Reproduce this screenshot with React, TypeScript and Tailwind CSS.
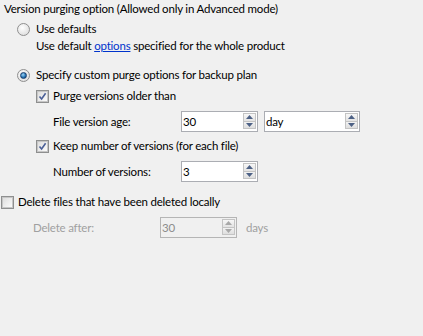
import React from "react";

function Radio({ checked }: { checked?: boolean }) {
  return (
    <span className="relative flex h-[13px] w-[13px] shrink-0 items-center justify-center rounded-full border border-[#8f8f8f] bg-[radial-gradient(circle_at_40%_35%,#ffffff,#d6d6d6)]">
      {checked && (
        <span className="h-[7px] w-[7px] rounded-full border border-[#1a3f6e] bg-[radial-gradient(circle_at_40%_35%,#9fd4f5,#1f6fb0_60%,#0e3f6c)]" />
      )}
    </span>
  );
}

function Check({ checked }: { checked?: boolean }) {
  return (
    <span className="flex h-[13px] w-[13px] shrink-0 items-center justify-center border border-[#8e8f8f] bg-white">
      <span className="flex h-[11px] w-[11px] items-center justify-center border border-[#c6c6c6] bg-[linear-gradient(135deg,#dedede,#fbfbfb)]">
        {checked && (
          <svg width="9" height="9" viewBox="0 0 9 9">
            <path d="M1.5 4.5 L3.6 7 L7.6 1.2" fill="none" stroke="#4a5f97" strokeWidth="1.6" />
          </svg>
        )}
      </span>
    </span>
  );
}

function Arrow({ up, disabled }: { up?: boolean; disabled?: boolean }) {
  return (
    <svg width="7" height="4" viewBox="0 0 7 4">
      <path
        d={up ? "M0 4 L3.5 0 L7 4 Z" : "M0 0 L3.5 4 L7 0 Z"}
        fill={disabled ? "#a8a8a8" : "#4d6185"}
      />
    </svg>
  );
}

function Spin({
  value,
  width,
  disabled,
}: {
  value: string;
  width: string;
  disabled?: boolean;
}) {
  return (
    <div
      className={`flex h-[21px] ${width} items-start justify-between border pt-[1px] pr-[1px] pl-[1px] ${
        disabled ? "border-[#b5b5b5] bg-[#f0f0f0] text-[#8c8c8c]" : "border-[#abadb3] bg-white text-black"
      }`}
    >
      <span className="leading-[18px]">{value}</span>
      <div className="flex h-[17px] w-[13px] flex-col">
        <div className="flex h-1/2 items-center justify-center border border-[#c4c4c4] bg-[linear-gradient(#f7f7f7,#e3e3e3)]">
          <Arrow up disabled={disabled} />
        </div>
        <div className="-mt-px flex h-1/2 items-center justify-center border border-[#c4c4c4] bg-[linear-gradient(#f2f2f2,#dedede)]">
          <Arrow disabled={disabled} />
        </div>
      </div>
    </div>
  );
}

export default function App() {
  return (
    <div className="h-[336px] w-[423px] bg-[#f0f0f0] font-['Lato',sans-serif] text-[11.5px] tracking-[-0.2px] text-black">
      <div className="flex h-[17px] items-center pl-[4px]">
        Version purging option (Allowed only in Advanced mode)
      </div>

      <div className="mt-[4px] flex h-[16px] items-center gap-[6px] pl-[17px]">
        <Radio />
        <span>Use defaults</span>
      </div>
      <div className="mt-[1px] flex h-[16px] items-center pl-[36px]">
        Use default&nbsp;<span className="text-[#0033cc] underline">options</span>&nbsp;specified for the whole product
      </div>

      <div className="mt-[13px] flex h-[16px] items-center gap-[6px] pl-[17px]">
        <Radio checked />
        <span>Specify custom purge options for backup plan</span>
      </div>

      <div className="mt-[5px] flex h-[16px] items-center gap-[4px] pl-[36px]">
        <Check checked />
        <span>Purge versions older than</span>
      </div>
      <div className="mt-[7px] flex h-[21px] items-center pl-[53px]">
        <span className="w-[128px]">File version age:</span>
        <Spin value="30" width="w-[77px]" />
        <div className="ml-[6px]">
          <Spin value="day" width="w-[96px]" />
        </div>
      </div>

      <div className="mt-[6px] flex h-[16px] items-center gap-[4px] pl-[36px]">
        <Check checked />
        <span>Keep number of versions (for each file)</span>
      </div>
      <div className="mt-[7px] flex h-[21px] items-center pl-[53px]">
        <span className="w-[128px]">Number of versions:</span>
        <Spin value="3" width="w-[77px]" />
      </div>

      <div className="mt-[12px] flex h-[16px] items-center gap-[4px] pl-[1px]">
        <Check />
        <span>Delete files that have been deleted locally</span>
      </div>
      <div className="mt-[7px] flex h-[21px] items-center pl-[33px] text-[#a0a0a0]">
        <span className="w-[127px]">Delete after:</span>
        <Spin value="30" width="w-[77px]" disabled />
        <span className="ml-[9px]">days</span>
      </div>
    </div>
  );
}
